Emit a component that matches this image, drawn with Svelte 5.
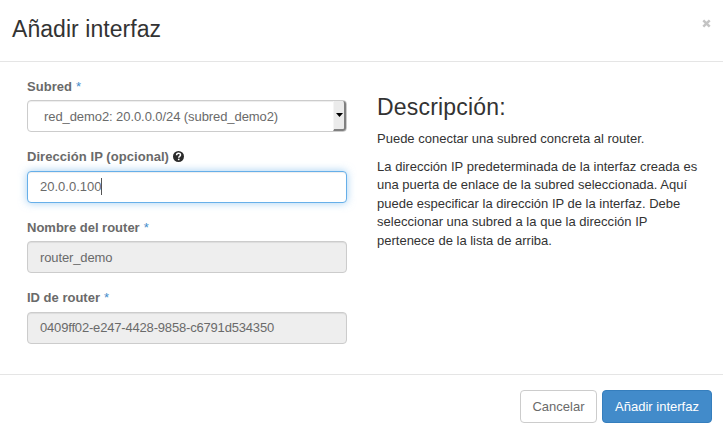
<script>
  let subnet = $state('red_demo2: 20.0.0.0/24 (subred_demo2)');
  const address = '20.0.0.100';
  const lines = [
    'La dirección IP predeterminada de la interfaz creada es',
    'una puerta de enlace de la subred seleccionada. Aquí',
    'puede especificar la dirección IP de la interfaz. Debe',
    'seleccionar una subred a la que la dirección IP',
    'pertenece de la lista de arriba.'
  ];
</script>

<div class="modal">
  <header>
    <h3><span>Añadir interfaz</span></h3>
    <button class="close" aria-label="Cerrar">
      <svg width="9" height="9" viewBox="0 0 9 9"><path d="M1.3 1.3 7.7 7.7M7.7 1.3 1.3 7.7" stroke="#c4c4c4" stroke-width="2.5" /></svg>
    </button>
  </header>

  <main>
    <section class="form">
      <div class="group">
        <div class="label"><span class="l1">Subred</span><i>*</i></div>
        <div class="control select">
          <span class="v1">{subnet}</span>
          <div class="arrow"><svg width="7" height="4" viewBox="0 0 7 4"><path d="M0 0h7L3.5 4z" fill="#000" /></svg></div>
        </div>
      </div>
      <div class="group">
        <div class="label">
          <span class="l2">Dirección IP (opcional)</span>
          <svg class="help" width="11" height="11" viewBox="0 0 11 11">
            <circle cx="5.5" cy="5.5" r="5.5" fill="#2b2b2b" />
            <path d="M3.6 4.2C3.6 1.6 7.5 1.7 7.5 4c0 1.4-1.8 1.4-1.8 2.8" fill="none" stroke="#fff" stroke-width="1.5" />
            <path d="M4.9 7.7h1.6v1.5H4.9z" fill="#fff" />
          </svg>
        </div>
        <div class="control focus"><span class="v2">{address}</span><b class="caret"></b></div>
      </div>
      <div class="group">
        <div class="label"><span class="l3">Nombre del router</span><i>*</i></div>
        <div class="control off"><span class="v3">router_demo</span></div>
      </div>
      <div class="group">
        <div class="label"><span class="l4">ID de router</span><i>*</i></div>
        <div class="control off"><span class="v4">0409ff02-e247-4428-9858-c6791d534350</span></div>
      </div>
    </section>

    <section class="info">
      <h3><span>Descripción:</span></h3>
      <p><span class="p0">Puede conectar una subred concreta al router.</span></p>
      <p>
        {#each lines as line, n}
          <span class="line p{n + 1}">{line}</span>
        {/each}
      </p>
    </section>
  </main>

  <footer>
    <button class="btn cancel"><span>Cancelar</span></button>
    <button class="btn primary"><span>Añadir interfaz</span></button>
  </footer>
</div>

<style>
  :global(body) { background: #fff; overflow: hidden; }
  * { box-sizing: border-box; }
  .modal {
    height: 437px; display: flex; flex-direction: column;
    font: 13px/18.57px "Liberation Sans", Arial, sans-serif; color: #333; background: #fff;
  }
  header {
    height: 62px; flex: none; display: flex; justify-content: space-between;
    border-bottom: 1px solid #e5e5e5; padding: 0 12px;
  }
  h3 { margin: 0; font-weight: 400; font-size: 23px; line-height: 26px; white-space: nowrap; }
  header h3 { padding-top: 16px; letter-spacing: 0.05px; }
  .close { border: 0; background: none; padding: 0; margin-top: 19px; height: 9px; display: flex; }
  main { height: 312px; flex: none; display: flex; padding: 15px 15px 0 27px; }
  .form { width: 320px; flex: none; margin-right: 30px; }
  .group { height: 70.5px; }
  .label {
    height: 23.2px; padding-top: 0.5px; display: flex; color: #6a6a6a; font-weight: 700; white-space: nowrap;
  }
  i { font-style: normal; font-weight: 400; color: #428bca; margin-left: 4px; }
  .help { margin: 3px 0 0 4px; }
  .l1 { letter-spacing: 0.05px; }
  .l2 { letter-spacing: 0.06px; }
  .control {
    height: 32px; border: 1px solid #ccc; border-radius: 4px; padding: 2px 12px 0;
    display: flex; align-items: center; color: #6a6a6a; background: #fff; white-space: nowrap;
    box-shadow: inset 0 1px 1px rgba(0,0,0,.075);
  }
  .select { padding: 0 0 0 16px; justify-content: space-between; }
  .v1 { letter-spacing: -0.08px; padding-top: 2px; }
  .v3 { letter-spacing: -0.12px; }
  .v4 { letter-spacing: -0.18px; }
  .arrow {
    width: 13px; height: 30px; background: #ebebeb; display: flex; align-items: center; justify-content: center;
    border-right: 2px solid #808080; border-bottom: 2px solid #808080; border-left: 1px solid #f5f5f5; border-radius: 0 3px 3px 0;
  }
  .focus { border-color: #66afe9; box-shadow: inset 0 1px 1px rgba(0,0,0,.075), 0 0 8px rgba(102,175,233,.6); }
  .off { background: #eee; }
  .caret { width: 1px; height: 17px; margin-top: -2px; background: #555; }
  .info { flex: none; }
  .info h3 { padding-top: 17px; margin-bottom: 9.5px; letter-spacing: 0.2px; }
  p { margin: 0 0 9.5px; white-space: nowrap; }
  .line { display: block; }
  .p1 { letter-spacing: 0.02px; }
  .p4 { letter-spacing: 0.02px; }
  footer {
    height: 63px; border-top: 1px solid #e5e5e5; padding: 15px 11px 0; display: flex; justify-content: flex-end; gap: 5px;
  }
  .btn {
    height: 33px; border: 1px solid #ccc; border-radius: 4px; font: inherit; padding: 2px 0 0; background: #fff;
    color: #6a6a6a; width: 77px; white-space: nowrap;
  }
  .primary { width: 110px; background: #428bca; border-color: #357ebd; color: #fff; }
</style>
